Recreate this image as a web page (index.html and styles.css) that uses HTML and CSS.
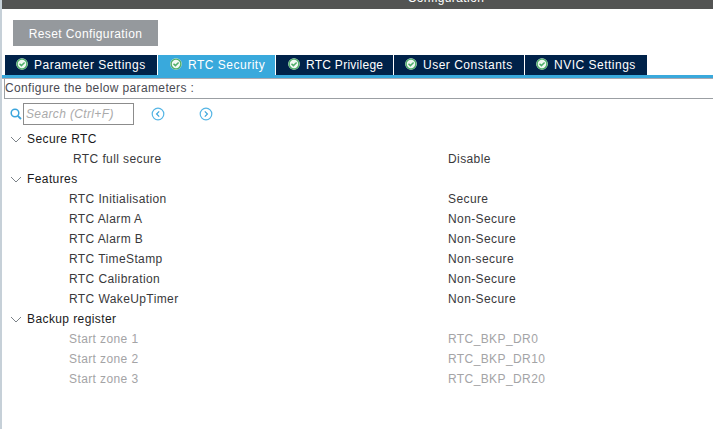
FILE: index.html
```html
<!DOCTYPE html>
<html lang="en">
<head>
<meta charset="utf-8">
<title>Configuration</title>
<link rel="stylesheet" href="styles.css">
</head>
<body>
<svg class="defs" width="0" height="0" aria-hidden="true">
  <symbol id="check" viewBox="0 0 12 12">
    <circle cx="6" cy="6" r="5.8" fill="#f2f8f3"/>
    <circle cx="6" cy="6" r="4.9" fill="none" stroke="#4fae6a" stroke-width="1.4"/>
    <path d="M3.5 5.7 5.4 7.6 8.6 4.5" fill="none" stroke="#4fae6a" stroke-width="1.5"/>
  </symbol>
  <symbol id="chev" viewBox="0 0 12 7">
    <path d="M1 1 6 6 11 1" fill="none" stroke="#7b8288" stroke-width="1"/>
  </symbol>
</svg>
<header class="titlebar"><span class="title">Configuration</span></header>
<main class="main">
  <div class="reset-row"><button class="reset">Reset Configuration</button></div>
  <nav class="tabs">
    <div class="tab w1"><svg class="ico"><use href="#check"/></svg>Parameter Settings</div>
    <div class="tab w2 active"><svg class="ico"><use href="#check"/></svg>RTC Security</div>
    <div class="tab w3"><svg class="ico"><use href="#check"/></svg>RTC Privilege</div>
    <div class="tab w4"><svg class="ico"><use href="#check"/></svg>User Constants</div>
    <div class="tab w5"><svg class="ico"><use href="#check"/></svg>NVIC Settings</div>
  </nav>
  <div class="tab-rule"></div>
  <div class="config-label">Configure the below parameters :</div>
  <div class="search-row">
    <svg class="search-ico" viewBox="0 0 12 12"><circle cx="5" cy="5" r="3.8" fill="none" stroke="#3ba5dc" stroke-width="1.5"/><path d="M7.8 7.8 11 11" stroke="#3ba5dc" stroke-width="1.8"/></svg>
    <div class="search-box">Search (Ctrl+F)</div>
    <svg class="nav-ico first" viewBox="0 0 14 14"><circle cx="7" cy="7" r="5.8" fill="none" stroke="#55b5e5" stroke-width="1.2"/><path d="M8.2 4.4 5.6 7 8.2 9.6" fill="none" stroke="#3ba5dc" stroke-width="1.2"/></svg>
    <svg class="nav-ico second" viewBox="0 0 14 14"><circle cx="7" cy="7" r="5.8" fill="none" stroke="#55b5e5" stroke-width="1.2"/><path d="M5.8 4.4 8.4 7 5.8 9.6" fill="none" stroke="#3ba5dc" stroke-width="1.2"/></svg>
  </div>
  <section class="tree">
    <div class="group"><svg class="chev"><use href="#chev"/></svg>Secure RTC</div>
    <div class="row deep"><span class="name">RTC full secure</span><span>Disable</span></div>
    <div class="group"><svg class="chev"><use href="#chev"/></svg>Features</div>
    <div class="row"><span class="name">RTC Initialisation</span><span>Secure</span></div>
    <div class="row"><span class="name">RTC Alarm A</span><span>Non-Secure</span></div>
    <div class="row"><span class="name">RTC Alarm B</span><span>Non-Secure</span></div>
    <div class="row"><span class="name">RTC TimeStamp</span><span>Non-secure</span></div>
    <div class="row"><span class="name">RTC Calibration</span><span>Non-Secure</span></div>
    <div class="row"><span class="name">RTC WakeUpTimer</span><span>Non-Secure</span></div>
    <div class="group"><svg class="chev"><use href="#chev"/></svg>Backup register</div>
    <div class="row off"><span class="name">Start zone 1</span><span>RTC_BKP_DR0</span></div>
    <div class="row off"><span class="name">Start zone 2</span><span>RTC_BKP_DR10</span></div>
    <div class="row off"><span class="name">Start zone 3</span><span>RTC_BKP_DR20</span></div>
  </section>
</main>
</body>
</html>
```
FILE: styles.css
```css
* { box-sizing: border-box; }
html, body { margin: 0; height: 100%; overflow: hidden; }
body {
  background: #fff;
  font-family: "Liberation Sans", Arial, sans-serif;
  font-size: 12px;
  color: #39393b;
  border-left: 2px solid #c6d0d8;
}
.defs { display: block; height: 0; }
.titlebar {
  height: 9px;
  background: #535453;
  overflow: hidden;
  display: flex;
  justify-content: center;
  padding-left: 177px;
}
.title {
  color: #fff;
  line-height: 14px;
  margin-top: -9px;
  letter-spacing: .4px;
}
.main { display: flex; flex-direction: column; }
.reset-row { padding: 11px 0 0 11px; height: 46px; }
.reset {
  display: block;
  width: 145px;
  height: 26px;
  border: 0;
  padding: 1px 0 0;
  background: #95999d;
  color: #fff;
  font: 12px "Liberation Sans", Arial, sans-serif;
  letter-spacing: .4px;
}
.tabs { display: flex; gap: 1px; padding-left: 3px; height: 20px; }
.tab {
  height: 20px;
  background: #002249;
  color: #fff;
  display: flex;
  align-items: center;
  letter-spacing: .5px;
  position: relative;
  white-space: nowrap;
}
.tab.active { background: #39a9dc; }
.w1 { width: 152px; padding-left: 29px; }
.w2 { width: 117px; padding-left: 30px; }
.w3 { width: 117px; padding-left: 30px; letter-spacing: .27px; }
.w4 { width: 130px; padding-left: 29px; }
.w5 { width: 122px; padding-left: 29px; }
.ico { position: absolute; left: 11px; top: 3px; width: 12px; height: 12px; }
.w2 .ico, .w3 .ico { left: 12px; }
.tab-rule {
  height: 4px;
  border-top: 3px solid #39a9dc;
  border-bottom: 1px solid #a9a9b2;
}
.config-label {
  height: 20px;
  margin-left: 2px;
  border: 1px solid #9b9fa3;
  border-top: 0;
  border-right: 0;
  line-height: 19px;
  color: #4a4a52;
  letter-spacing: .37px;
  white-space: nowrap;
}
.search-row {
  display: flex;
  align-items: center;
  height: 29px;
  padding: 4px 0 3px 8px;
}
.search-ico { width: 12px; height: 12px; flex: none; }
.search-box {
  width: 111px;
  height: 22px;
  margin-left: 1px;
  border: 1px solid #8c8c8c;
  color: #aaa;
  font-style: italic;
  line-height: 20px;
  padding-left: 2px;
  letter-spacing: .36px;
  white-space: nowrap;
}
.nav-ico { width: 14px; height: 14px; flex: none; }
.first { margin-left: 17px; }
.second { margin-left: 34px; }
.tree { padding-top: 1px; }
.group, .row { height: 20px; line-height: 20px; letter-spacing: .4px; white-space: nowrap; }
.group { display: flex; align-items: center; padding-left: 8px; color: #1a1a20; }
.chev { width: 12px; height: 7px; margin-right: 5px; flex: none; }
.row { display: flex; padding-left: 67px; }
.row.deep { padding-left: 71px; }
.name { width: 379px; flex: none; }
.row.deep .name { width: 375px; }
.off { color: #a4a4a6; }
```
